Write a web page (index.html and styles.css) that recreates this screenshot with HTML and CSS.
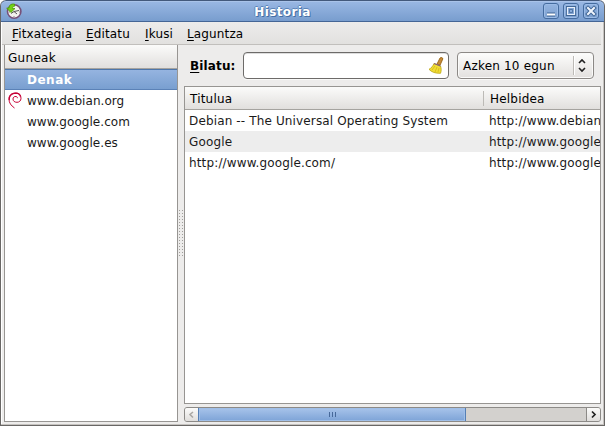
FILE: index.html
```
<!DOCTYPE html>
<html lang="eu">
<head>
<meta charset="utf-8">
<title>Historia</title>
<link rel="stylesheet" href="styles.css">
</head>
<body>
<div class="window">
  <header class="titlebar">
    <svg class="app-icon" width="16" height="16" viewBox="0 0 16 16">
      <circle cx="8.2" cy="8.500" r="6.700" fill="#f2f2ee" stroke="#765078" stroke-width="1.600"/>
      <path d="M8 8.500 13 7.500M8 8.500l3 2.500M8 8.500l-3 2" stroke="#555" stroke-width="1" fill="none"/>
      <path d="M8 13v1M3 9h1M13 9h1" stroke="#888"/>
      <path d="M8.500 1C5 .6 3 2 3 5H.7l4.200 4.500L9 5.500H6.500c0-1.500.8-2.200 2-2.200z" fill="#73d216" stroke="#4e9a06" stroke-width=".8"/>
    </svg>
    <h1 class="title">Historia</h1>
    <div class="controls">
      <svg class="control" width="16" height="16" viewBox="1 1 14 14"><path d="M4 11.500h8" stroke="#416797" stroke-width="4"/><path d="M4 11.500h8" stroke="#fff" stroke-width="2"/></svg>
      <svg class="control" width="16" height="16" viewBox="1 1 14 14"><path d="M4.500 4.500h7v7h-7z" fill="none" stroke="#416797" stroke-width="3"/><path d="M4.500 4.500h7v7h-7z" fill="#7fa3d3" stroke="#e8f0fb" stroke-width="1.200"/><path d="M6.500 6.500h3v3h-3z" fill="#8aaddc" stroke="#416797" stroke-width=".8"/></svg>
      <svg class="control" width="16" height="16" viewBox="1 1 14 14"><path d="m5 5 6 6m0-6-6 6" stroke="#416797" stroke-width="4" stroke-linecap="square"/><path d="m5 5 6 6m0-6-6 6" stroke="#f0f5fc" stroke-width="2" stroke-linecap="square"/></svg>
    </div>
  </header>
  <nav class="menubar">
    <span class="menu m1"><u>F</u>itxategia</span><span class="menu m2"><u>E</u>ditatu</span><span class="menu m3"><u>I</u>kusi</span><span class="menu m4"><u>L</u>aguntza</span>
  </nav>
  <main class="panes">
    <section class="sites">
      <div class="head">Guneak</div>
      <div class="site selected">Denak</div>
      <div class="site"><svg class="swirl" width="14" height="17" viewBox="0 0 14 17" fill="none" stroke="#c70036"><path d="M6.500 16C3 13.500 1 11 1 7 1 3 3.500 1 7.500 1c3.500 0 5.500 2 5.500 5.300 0 2.500-1.800 4-4 4C6.500 10.300 5 9 5 7c0-1.700 1.200-2.700 3-2.500 1 0 1.500.8 1.300 1.700" stroke-width="1"/><path d="M1.200 8C1 4 3.500 1.500 8 1.200c2.500 0 4 1.300 4.500 3.300" stroke-width="1.300"/></svg><span>www.debian.org</span></div>
      <div class="site">www.google.com</div>
      <div class="site">www.google.es</div>
    </section>
    <div class="splitter"><i class="grip"></i></div>
    <section class="history">
      <div class="toolbar">
        <label class="label"><u>B</u>ilatu:</label>
        <div class="entry">
          <svg class="broom" width="16" height="17" viewBox="0 0 16 17"><path d="m9 7 3-6c1-1 3-.5 2.800 1L12 8.300z" fill="#c78b3a" stroke="#8f5902" stroke-width=".8"/><path d="M6 6.500 12.500 9c.8 2 1 5 0 7.300C7 16.500 3.500 15 1 12.300 3.500 11 5 9 6 6.500z" fill="#f0dc35" stroke="#bba510" stroke-width=".8"/><path d="m7 9-3 4m5-3-2 5m4-4-1 4" stroke="#d0b310" stroke-width=".7"/><path d="m6 6.500 6.500 2.500" stroke="#85607b" stroke-width="1.300"/></svg>
        </div>
        <div class="combo"><span class="combo-text">Azken 10 egun</span><svg class="arrows" width="17" height="19"><path d="M.5 0v19" stroke="#bcbab6"/><path d="M1.500 0v19" stroke="#fff"/><path d="m6 7 3-3 3 3m0 5-3 3-3-3" fill="none" stroke="#222" stroke-width="1.600"/></svg></div>
      </div>
      <div class="table">
        <div class="row thead"><span class="c1">Titulua</span><span class="c2">Helbidea</span></div>
        <div class="row"><span class="c1">Debian -- The Universal Operating System</span><span class="c2">http://www.debian</span></div>
        <div class="row alt"><span class="c1">Google</span><span class="c2">http://www.google</span></div>
        <div class="row"><span class="c1">http://www.google.com/</span><span class="c2">http://www.google</span></div>
      </div>
      <div class="scrollbar">
        <svg class="step" width="13" height="13"><path d="M8 4 5 6.500 8 9.500" fill="none" stroke="#aaa8a4" stroke-width="1.600"/></svg>
        <div class="thumb"><i></i><i></i><i></i></div>
        <div class="trough"></div>
        <svg class="step right" width="13" height="13"><path d="m5 3.500 3 3-3 3" fill="none" stroke="#222" stroke-width="1.700"/></svg>
      </div>
    </section>
  </main>
</div>
</body>
</html>
```
FILE: styles.css
```
* { box-sizing: border-box; }
body { margin: 0; background: #fff; overflow: hidden; font: 12px/23px "DejaVu Sans", sans-serif; letter-spacing: .14px; color: #1a1a1a; }
.window { width: 605px; height: 426px; display: flex; flex-direction: column; background: #edeceb; border: 1px solid #696765; border-top: 0; border-radius: 6px 6px 0 0; overflow: hidden; box-shadow: inset -1px -1px #c5c2bf, inset 1px 0 #fff; }
.titlebar { height: 22px; flex: none; margin: 0 -1px; display: flex; align-items: flex-start; padding: 2px 5px 0 5px; background: linear-gradient(#9ab8e4, #789dce); border: 1px solid #456696; border-top-color: #43597c; border-radius: 6px 6px 0 0; box-shadow: inset 0 1px #a9c3e9; }
.app-icon { flex: none; }
.title { flex: 1; margin: -2px 0 0; font-size: 12px; line-height: 23px; text-align: center; color: #fff; text-shadow: 1px 1px #456fa5, -1px 0 #5b84b9, 0 -1px #5b84b9; letter-spacing: .4px; }
.controls { display: flex; gap: 4px; }
.control { border: 1px solid #456c9f; border-radius: 3px; box-shadow: inset 0 0 0 1px #9bbbe6; background: linear-gradient(#94b4e1, #7c9fce); }
.menubar { height: 23px; flex: none; margin: 0 3px 0 1px; padding: 1px 0 0 10px; display: flex; border-bottom: 1px solid #c1bfbc; background: linear-gradient(#edeceb, #e2e1df); color: #000; }
.menu { white-space: nowrap; }
.m1 { width: 74px; } .m2 { width: 59px; } .m3 { width: 42px; }
u { text-decoration-thickness: 1px; text-underline-offset: 2px; }
.panes { height: 381px; display: flex; padding: 0 3px 3px; }
.sites { width: 174px; border: 1px solid #979592; background: #fff; border-top: 0; letter-spacing: .05px; }
.head { height: 24px; padding: 2px 3px; border-bottom: 1px solid #a5a39f; background: linear-gradient(#fbfbfa, #e1dfdd); color: #000; letter-spacing: .3px; }
.site { position: relative; height: 21px; padding-left: 22px; }
.selected { color: #fff; font-weight: bold; background: linear-gradient(#95b4e0, #799fd0); border-top: 1px solid #4d76aa; border-bottom: 1px solid #5b82b7; line-height: 21px; letter-spacing: .5px; }
.swirl { position: absolute; left: 3px; top: 2px; }
.splitter { width: 6px; display: flex; align-items: center; justify-content: center; }
.grip { width: 5px; height: 47px; background: linear-gradient(90deg, transparent 1px, #edeceb 1px) 0 0 / 3px 3px, linear-gradient(#a09e9b 1px, transparent 1px) 0 0 / 3px 3px; }
.history { width: 417px; padding-top: 7px; }
.toolbar { height: 34px; display: flex; align-items: flex-start; }
.label { width: 59px; padding: 3px 0 0 6px; font-weight: bold; color: #000; }
.entry { width: 206px; height: 27px; border: 1px solid #6d6b69; border-radius: 4px; background: #fff; display: flex; justify-content: flex-end; padding: 4px 4px 0; box-shadow: 0 1px #f8f8f7, inset 0 1px #ddd; }
.combo { width: 137px; height: 27px; margin-left: 8px; padding: 2px 3px 0 5px; border: 1px solid #8c8986; border-radius: 4px; background: linear-gradient(#fdfdfc, #e2e0de); display: flex; justify-content: space-between; box-shadow: 0 1px #f8f8f7, inset 0 0 0 1px #fafaf9; color: #000; white-space: nowrap; letter-spacing: .2px; }
.arrows { margin-top: 1px; }
.table { height: 318px; border: 1px solid #979592; background: #fff; overflow: hidden; }
.row { height: 21px; display: flex; white-space: nowrap; }
.alt { background: #ededed; }
.c1 { flex: none; width: 299px; padding-left: 4px; }
.c2 { padding-left: 5px; }
.thead { height: 23px; border-bottom: 1px solid #a5a39f; background: linear-gradient(#fbfbfa, #e1dfdd); color: #000; line-height: 25px; letter-spacing: .2px; }
.thead .c1 { padding-left: 5px; background: linear-gradient(#bcbab6, #bcbab6) right 4px / 1px 15px no-repeat; }
.thead .c2 { padding-left: 6px; }
.scrollbar { height: 15px; margin-top: 3px; display: flex; border: 1px solid #8c8a87; border-radius: 3px; overflow: hidden; background: #d3d1ce; }
.step { flex: none; background: linear-gradient(#fbfbfa, #e0dedc); }
.right { border-left: 1px solid #8c8a87; width: 14px; }
.thumb { width: 268px; margin: -1px 0; display: flex; gap: 2px; align-items: center; justify-content: center; border: 1px solid #557fb5; background: linear-gradient(#a8c4ea, #7da3d7); box-shadow: inset 0 0 0 1px #a0bfe8; }
.thumb i { width: 1px; height: 5px; background: #47699a; }
.trough { flex: 1; }
```
